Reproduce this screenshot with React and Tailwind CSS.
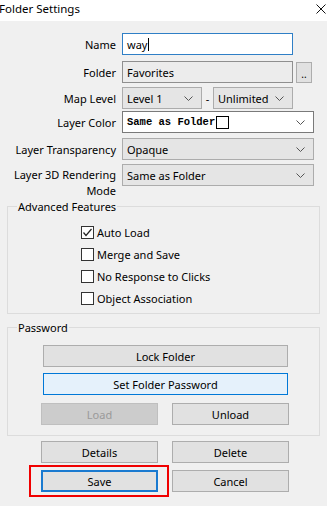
import React from 'react';

const Chevron = () => (
  <svg width="9" height="5" viewBox="0 0 9 5" className="shrink-0">
    <polyline points="0.5,0.5 4.5,4.5 8.5,0.5" fill="none" stroke="#555" strokeWidth="1" />
  </svg>
);

const Combo = ({ value, className = '', white = false }) => (
  <div
    className={`h-[22px] flex items-center justify-between pl-[4px] pr-[8px] border ${
      white ? 'bg-white border-[#7a7a7a]' : 'bg-[#e5e5e5] border-[#acacac]'
    } ${className}`}
  >
    {value}
    <Chevron />
  </div>
);

const Label = ({ children }) => (
  <div className="w-[122px] shrink-0 text-right pr-[6px]">{children}</div>
);

const Btn = ({ children, className = '' }) => (
  <div className={`h-[22px] flex items-center justify-center border ${className}`}>{children}</div>
);

const Check = ({ checked, label }) => (
  <div className="h-[22px] flex items-center pl-[73px]">
    <div className="w-[13px] h-[13px] border border-[#333] bg-white flex items-center justify-center">
      {checked && (
        <svg width="11" height="11" viewBox="0 0 11 11">
          <polyline points="1.5,5.5 4,8.5 9.5,2" fill="none" stroke="#222" strokeWidth="1.2" />
        </svg>
      )}
    </div>
    <span className="ml-[3px]">{label}</span>
  </div>
);

export default function App() {
  return (
    <div className="w-[327px] h-[506px] bg-[#f0f0f0] overflow-hidden font-['Noto_Sans',sans-serif] text-[11px] leading-[15px] text-black">
      <div className="h-[21px] bg-white flex items-center justify-between pr-[1px]">
        <span className="text-[11.5px] -ml-[1px] -mt-[4px]">Folder Settings</span>
        <svg width="10" height="10" viewBox="0 0 10 10" className="-mt-[3px]">
          <path d="M0.5,0.5 L9.5,9.5 M9.5,0.5 L0.5,9.5" stroke="#111" strokeWidth="1" />
        </svg>
      </div>

      <div className="pt-[12px]">
        <div className="flex items-center">
          <Label>Name</Label>
          <div className="w-[171px] h-[22px] border border-[#2f7fc6] bg-white flex items-center pl-[4px]">
            way<span className="ml-[1px] w-px h-[13px] bg-black" />
          </div>
        </div>

        <div className="flex items-center mt-[6px]">
          <Label>Folder</Label>
          <div className="w-[171px] h-[22px] border border-[#8f8f8f] bg-[#ececec] flex items-center pl-[4px]">
            Favorites
          </div>
          <div className="ml-[3px] w-[16px] h-[21px] border border-[#adadad] bg-[#e1e1e1] flex items-end justify-center pb-[3px] text-[10px] leading-[10px]">
            ..
          </div>
        </div>

        <div className="flex items-center mt-[4px]">
          <Label>Map Level</Label>
          <Combo value="Level 1" className="w-[80px]" />
          <div className="w-[11px] text-center">-</div>
          <Combo value="Unlimited" className="w-[80px]" />
        </div>

        <div className="flex items-center mt-[2px]">
          <Label>Layer Color</Label>
          <Combo
            white
            className="w-[192px]"
            value={
              <div className="flex items-center">
                <span className="font-['Liberation_Mono',monospace] font-bold text-[10.5px]">Same as Folder</span>
                <span className="ml-[1px] w-[13px] h-[13px] border border-black bg-white" />
              </div>
            }
          />
        </div>

        <div className="flex items-center mt-[5px]">
          <Label>Layer Transparency</Label>
          <Combo value="Opaque" className="w-[192px]" />
        </div>

        <div className="flex items-start mt-[4px]">
          <div className="w-[122px] shrink-0 text-right pr-[6px] pt-[3px] leading-[16px]">
            Layer 3D Rendering
            <br />
            Mode
          </div>
          <Combo value="Same as Folder" className="w-[192px]" />
        </div>

        <fieldset className="mx-[7px] border border-[#dcdcdc] pb-[4px]">
          <legend className="ml-[9px] px-[1px] leading-[15px]">Advanced Features</legend>
          <div className="pt-[7px]">
            <Check checked label="Auto Load" />
            <Check label="Merge and Save" />
            <Check label="No Response to Clicks" />
            <Check label="Object Association" />
          </div>
        </fieldset>

        <fieldset className="mx-[7px] mt-[6px] border border-[#dcdcdc] pb-[10px]">
          <legend className="ml-[9px] px-[1px] leading-[15px]">Password</legend>
          <div className="pt-[10px]">
            <Btn className="ml-[35px] w-[245px] bg-[#e1e1e1] border-[#adadad]">Lock Folder</Btn>
            <Btn className="ml-[35px] w-[245px] mt-[6px] bg-[#e5f1fb] border-[#0078d7]">Set Folder Password</Btn>
            <div className="flex gap-[14px] ml-[33px] mt-[8px]">
              <Btn className="w-[117px] bg-[#cccccc] border-[#bfbfbf] text-[#9a9a9a]">Load</Btn>
              <Btn className="w-[117px] bg-[#e1e1e1] border-[#adadad]">Unload</Btn>
            </div>
          </div>
        </fieldset>

        <div className="flex gap-[14px] ml-[41px] mt-[5px]">
          <Btn className="w-[117px] bg-[#e1e1e1] border-[#adadad]">Details</Btn>
          <Btn className="w-[117px] bg-[#e1e1e1] border-[#adadad]">Delete</Btn>
        </div>
        <div className="flex gap-[14px] ml-[41px] mt-[7px]">
          <div className="relative">
            <Btn className="w-[117px] bg-[#e1e1e1] border-2 border-[#1a7ad0]">Save</Btn>
            <div className="absolute -left-[12px] -top-[5px] w-[140px] h-[32px] border-2 border-[#f00000]" />
          </div>
          <Btn className="w-[117px] bg-[#e1e1e1] border-[#adadad]">Cancel</Btn>
        </div>
      </div>
    </div>
  );
}
